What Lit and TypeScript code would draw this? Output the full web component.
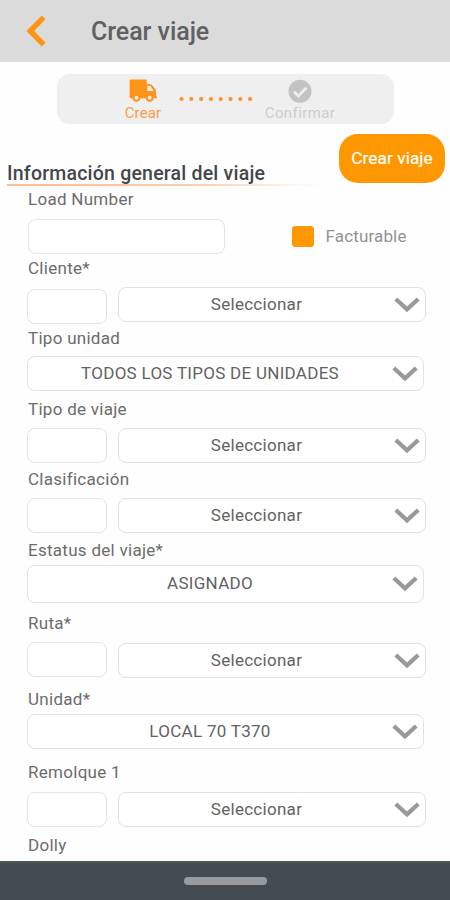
import { LitElement, html, css, svg, nothing } from "lit";
import { customElement, property } from "lit/decorators.js";

interface Field {
  id: string;
  label: string;
  value?: string;
  code?: boolean;
}

const FIELDS: Field[] = [
  { id: "cliente", label: "Cliente*", value: "Seleccionar", code: true },
  { id: "tipo-unidad", label: "Tipo unidad", value: "TODOS LOS TIPOS DE UNIDADES" },
  { id: "tipo-viaje", label: "Tipo de viaje", value: "Seleccionar", code: true },
  { id: "clasificacion", label: "Clasificación", value: "Seleccionar", code: true },
  { id: "estatus", label: "Estatus del viaje*", value: "ASIGNADO" },
  { id: "ruta", label: "Ruta*", value: "Seleccionar", code: true },
  { id: "unidad", label: "Unidad*", value: "LOCAL 70 T370" },
  { id: "remolque", label: "Remolque 1", value: "Seleccionar", code: true },
  { id: "dolly", label: "Dolly" },
];

@customElement("select-box")
export class SelectBox extends LitElement {
  @property() value = "";

  static styles = css`
    :host {
      display: grid;
      grid-template-columns: 1fr 26px;
      align-items: center;
      box-sizing: border-box;
      height: 35px;
      padding: 0 5px 0 0;
      border: 1.5px solid #e2e2e2;
      border-radius: 8px;
      background: #fff;
    }
    .value {
      padding-bottom: 2px;
      text-align: center;
      font-size: 17px;
      line-height: 18px;
      letter-spacing: 0.28px;
      color: #626262;
      white-space: nowrap;
    }
    .chevron {
      display: block;
      width: 26px;
      height: 16px;
    }
  `;

  render() {
    return html`
      <span class="value">${this.value}</span>
      <svg class="chevron" viewBox="0 0 26 16" fill="none" stroke="#999" stroke-width="4.2">
        <path d="M1.8 2 L13 12.4 L24.2 2" />
      </svg>
    `;
  }
}

@customElement("app-root")
export class AppRoot extends LitElement {
  static styles = css`
    :host {
      display: flex;
      flex-direction: column;
      box-sizing: border-box;
      width: 450px;
      height: 900px;
      overflow: hidden;
      background: #fefefe;
      font-family: Roboto, "Liberation Sans", sans-serif;
    }
    .bar {
      flex: none;
      display: flex;
      align-items: center;
      box-sizing: border-box;
      height: 61.5px;
      padding: 1px 0 0 26px;
      background: #dbdbdb;
    }
    .back {
      width: 20px;
      height: 32px;
    }
    .title {
      margin: 2px 0 0 45px;
      font-size: 25px;
      font-weight: 500;
      line-height: 30px;
      letter-spacing: -0.05px;
      color: #606163;
    }
    .stepper {
      flex: none;
      display: flex;
      box-sizing: border-box;
      width: 337px;
      height: 50px;
      margin: 12.5px 0 0 57px;
      border-radius: 13px;
      background: #efefef;
    }
    .step {
      display: flex;
      flex-direction: column;
      align-items: center;
      padding-top: 5px;
      font-size: 15px;
      line-height: 18px;
    }
    .step svg {
      width: 28px;
      height: 25px;
    }
    .active {
      width: 60px;
      margin-left: 56px;
      color: #fb9d48;
      letter-spacing: 0.15px;
    }
    .pending {
      width: 90px;
      color: #cdcdcd;
      letter-spacing: 0.4px;
    }
    .dots {
      width: 74px;
      height: 6px;
      margin: 22px 8px 0 6px;
    }
    .dots + .pending {
      margin-left: -6px;
    }
    .section {
      flex: none;
      display: flex;
      justify-content: space-between;
      height: 64px;
      padding: 10px 5px 0 7px;
      box-sizing: border-box;
    }
    .heading {
      display: flex;
      flex-direction: column;
      width: 315px;
      margin: 29px 0 0;
      font-size: 19.5px;
      font-weight: 500;
      line-height: 22px;
      letter-spacing: 0.21px;
      color: #44464c;
      white-space: nowrap;
    }
    .heading::after {
      content: "";
      height: 2px;
      margin-top: -1px;
      background: linear-gradient(90deg, #fbbd92, #fccfae 60%, #fefefe);
    }
    .create {
      flex: none;
      width: 106px;
      height: 49px;
      padding: 0 0 2px;
      border: 0;
      border-radius: 19px;
      background: #ff9800;
      color: #fff;
      font: 400 17.2px/20px Roboto, "Liberation Sans", sans-serif;
      letter-spacing: 0.1px;
      -webkit-text-stroke: 0.2px #fff;
    }
    .form {
      flex: 1;
      min-height: 0;
      display: grid;
      grid-template-rows: 69px 70px 71px 70px 71px 73px 76px 73px 73px 24px;
      margin: 2px 24px 0 27px;
      overflow: hidden;
    }
    .field {
      display: flex;
      flex-direction: column;
      gap: 8px;
    }
    .label {
      padding: 0 0 2px 1px;
      font-size: 17px;
      line-height: 18px;
      letter-spacing: 0.28px;
      color: #6c6c6c;
    }
    .controls {
      display: grid;
      grid-template-columns: 80px 308px;
      gap: 11px;
      align-items: start;
    }
    .single {
      grid-template-columns: 397px;
    }
    .input {
      box-sizing: border-box;
      height: 35px;
      border: 1.5px solid #e4e4e4;
      border-radius: 8px;
      background: #fff;
    }
    .load {
      gap: 9px;
    }
    .load .controls {
      grid-template-columns: 197px auto;
      gap: 67px;
      padding-left: 1px;
    }
    .check {
      display: flex;
      align-items: center;
      gap: 12px;
      height: 35px;
      font-size: 17px;
      line-height: 18px;
      letter-spacing: 0.15px;
      color: #929292;
    }
    .check-text {
      padding-bottom: 2px;
    }
    .box {
      width: 21.5px;
      height: 21.5px;
      border-radius: 3.5px;
      background: #ff9800;
    }
    .cliente .input {
      margin-top: 2px;
    }
    .tipo-unidad {
      gap: 7px;
    }
    .estatus {
      gap: 4px;
    }
    .estatus select-box {
      height: 38px;
    }
    .ruta select-box {
      margin-top: 1px;
    }
    .unidad {
      gap: 4px;
    }
    .remolque {
      gap: 9px;
    }
    .nav {
      flex: none;
      display: flex;
      justify-content: center;
      box-sizing: border-box;
      height: 39.5px;
      padding-top: 14px;
      border-top: 2px solid #4c5854;
      background: #454c51;
    }
    .handle {
      width: 83px;
      height: 8.5px;
      border-radius: 5px;
      background: #989c9f;
    }
  `;

  private renderField(f: Field) {
    return html`
      <div class="field ${f.id}">
        <span class="label">${f.label}</span>
        ${f.value
          ? html`<div class="controls ${f.code ? "" : "single"}">
              ${f.code ? html`<div class="input"></div>` : nothing}
              <select-box .value=${f.value}></select-box>
            </div>`
          : nothing}
      </div>
    `;
  }

  render() {
    return html`
      <header class="bar">
        <svg class="back" viewBox="0 0 20 32" fill="none" stroke="#ff9412" stroke-width="5.4">
          <path d="M17.6 2.4 L4.3 16 L17.6 29.6" />
        </svg>
        <span class="title">Crear viaje</span>
      </header>
      <nav class="stepper">
        <div class="step active">
          <svg viewBox="0 0 28 25">
            <path
              fill="#ff9418"
              d="M1.8 0.5 H16.6 Q17.8 0.5 17.8 1.7 V5 H20.5 Q22 5 23 6 L26 9.6 Q27 10.8 27 12 V16.6 Q28 16.8 28 18 V19.3 H24.6 A4 4 0 0 1 16.8 19.3 H11.4 A4 4 0 0 1 3.6 19.3 H1.8 Q0.6 19.3 0.6 18 V1.7 Q0.6 0.5 1.8 0.5 Z"
            />
            <path fill="#efefef" d="M18.4 6.8 H20.3 Q21.2 6.8 21.8 7.6 L24.8 12 H18.4 Z" />
            <circle cx="7.5" cy="18.8" r="2.9" fill="#efefef" stroke="#ff9418" stroke-width="1.9" />
            <circle cx="20.7" cy="18.8" r="2.9" fill="#efefef" stroke="#ff9418" stroke-width="1.9" />
          </svg>
          <span>Crear</span>
        </div>
        <svg class="dots" viewBox="0 0 74 6" fill="#ff9225">
          ${[0, 1, 2, 3, 4, 5, 6, 7].map((i) => svg`<circle cx=${2.5 + i * 9.8} cy="3" r="2.1" />`)}
        </svg>
        <div class="step pending">
          <svg viewBox="0 0 28 25">
            <circle cx="14" cy="12.3" r="11.5" fill="#c3c3c3" />
            <path d="M8 12.8 L12.4 17 L20.3 8.8" fill="none" stroke="#efefef" stroke-width="2.9" />
          </svg>
          <span>Confirmar</span>
        </div>
      </nav>
      <div class="section">
        <h1 class="heading">Información general del viaje</h1>
        <button class="create">Crear viaje</button>
      </div>
      <main class="form">
        <div class="field load">
          <span class="label">Load Number</span>
          <div class="controls">
            <div class="input"></div>
            <div class="check"><span class="box"></span><span class="check-text">Facturable</span></div>
          </div>
        </div>
        ${FIELDS.map((f) => this.renderField(f))}
      </main>
      <footer class="nav"><span class="handle"></span></footer>
    `;
  }
}
